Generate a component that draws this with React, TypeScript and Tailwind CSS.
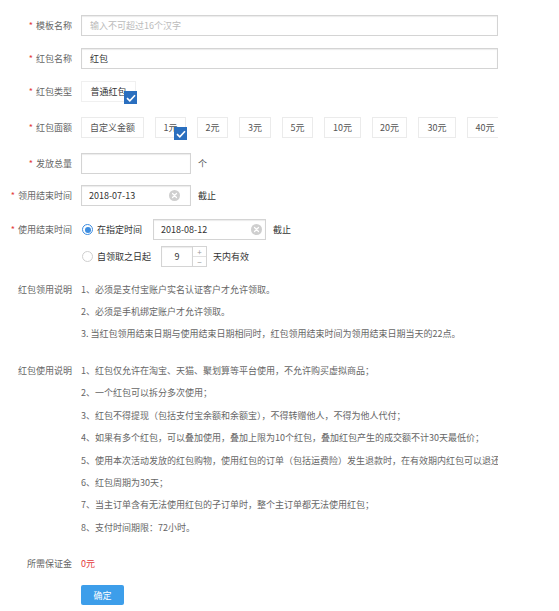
import React from 'react';

const font = { fontFamily: '"Noto Sans CJK SC", "Noto Sans", sans-serif' };

function Star() {
  return <span className="text-[#e4393c] mr-[3px]">*</span>;
}

function Label({ text, required }: { text: string; required?: boolean }) {
  return (
    <div className="w-[72px] shrink-0 text-right text-[#666] whitespace-nowrap">
      {required && <Star />}
      {text}
    </div>
  );
}

function ClearIcon() {
  return (
    <svg width="11" height="11" viewBox="0 0 11 11" className="shrink-0">
      <circle cx="5.5" cy="5.5" r="5.5" fill="#cfcfcf" />
      <path d="M3.5 3.5 L7.5 7.5 M7.5 3.5 L3.5 7.5" stroke="#fff" strokeWidth="1.2" strokeLinecap="round" />
    </svg>
  );
}

function Check() {
  return (
    <span className="absolute right-[-2px] bottom-[-3px] w-[13px] h-[13px] bg-[#2a6fbf] flex items-center justify-center">
      <svg width="10" height="8" viewBox="0 0 10 8">
        <path d="M1 4.2 L3.8 6.8 L9 1.2" stroke="#fff" strokeWidth="1.6" fill="none" />
      </svg>
    </span>
  );
}

const inputCls =
  'h-[21px] border border-[#d4d4d4] shadow-[inset_0_1px_1px_rgba(0,0,0,0.08)] bg-white flex items-center';

const amounts = [
  { t: '自定义金额', w: 'w-[63px]' },
  { t: '1元', w: 'w-[31px]', checked: true },
  { t: '2元', w: 'w-[31px]' },
  { t: '3元', w: 'w-[32px]' },
  { t: '5元', w: 'w-[31px]' },
  { t: '10元', w: 'w-[37px]' },
  { t: '20元', w: 'w-[35px]' },
  { t: '30元', w: 'w-[38px]' },
  { t: '40元', w: 'w-[36px]' },
];

const getRules = [
  '1、必须是支付宝账户实名认证客户才允许领取。',
  '2、必须是手机绑定账户才允许领取。',
  '3. 当红包领用结束日期与使用结束日期相同时，红包领用结束时间为领用结束日期当天的22点。',
];

const useRules = [
  '1、红包仅允许在淘宝、天猫、聚划算等平台使用，不允许购买虚拟商品；',
  '2、一个红包可以拆分多次使用；',
  '3、红包不得提现（包括支付宝余额和余额宝），不得转赠他人，不得为他人代付；',
  '4、如果有多个红包，可以叠加使用，叠加上限为10个红包，叠加红包产生的成交额不计30天最低价；',
  '5、使用本次活动发放的红包购物，使用红包的订单（包括运费险）发生退款时，在有效期内红包可以退还至原账户；',
  '6、红包周期为30天；',
  '7、当主订单含有无法使用红包的子订单时，整个主订单都无法使用红包；',
  '8、支付时间期限：72小时。',
];

export default function App() {
  return (
    <div className="w-[559px] min-h-[611px] bg-white text-[9px] pt-[15px]" style={font}>
      {/* 模板名称 */}
      <div className="flex items-center">
        <Label text="模板名称" required />
        <div className={`${inputCls} ml-[9px] w-[417px] px-[8px] text-[#bbb]`}>输入不可超过16个汉字</div>
      </div>

      {/* 红包名称 */}
      <div className="flex items-center mt-[12px]">
        <Label text="红包名称" required />
        <div className={`${inputCls} ml-[9px] w-[417px] px-[8px] text-[#333]`}>红包</div>
      </div>

      {/* 红包类型 */}
      <div className="flex items-center mt-[12px]">
        <Label text="红包类型" required />
        <div className="ml-[9px] relative h-[21px] w-[55px] border border-[#f0f0f0] flex items-center justify-center text-[#333]">
          普通红包
          <Check />
        </div>
      </div>

      {/* 红包面额 */}
      <div className="flex items-center mt-[12px]">
        <Label text="红包面额" required />
        <div className="ml-[9px] w-[417px] overflow-hidden">
          <div className="flex gap-[11px] py-[3px]">
            {amounts.map(a => (
              <div
                key={a.t}
                className={`relative shrink-0 ${a.w} h-[21px] border border-[#ebebeb] flex items-center justify-center text-[#555] whitespace-nowrap`}
              >
                {a.t}
                {a.checked && <Check />}
              </div>
            ))}
          </div>
        </div>
      </div>

      {/* 发放总量 */}
      <div className="flex items-center mt-[12px]">
        <Label text="发放总量" required />
        <div className={`${inputCls} ml-[9px] w-[110px]`} />
        <span className="ml-[7px] text-[#555]">个</span>
      </div>

      {/* 领用结束时间 */}
      <div className="flex items-center mt-[11px]">
        <Label text="领用结束时间" required />
        <div className={`${inputCls} ml-[9px] w-[110px] pl-[7px] pr-[10px] justify-between text-[#333]`}>
          <span>2018-07-13</span>
          <ClearIcon />
        </div>
        <span className="ml-[7px] text-[#333]">截止</span>
      </div>

      {/* 使用结束时间 */}
      <div className="flex items-center mt-[13px]">
        <Label text="使用结束时间" required />
        <div className="ml-[10px] flex items-center">
          <span className="w-[11px] h-[11px] rounded-full border border-[#3d8de0] flex items-center justify-center">
            <span className="w-[6px] h-[6px] rounded-full bg-[#3d8de0]" />
          </span>
          <span className="ml-[4px] w-[56px] text-[#333]">在指定时间</span>
          <div className={`${inputCls} w-[113px] pl-[7px] pr-[3px] justify-between text-[#333]`}>
            <span>2018-08-12</span>
            <ClearIcon />
          </div>
          <span className="ml-[7px] text-[#333]">截止</span>
        </div>
      </div>

      <div className="flex items-center mt-[6px]">
        <div className="w-[72px] shrink-0" />
        <div className="ml-[10px] flex items-center">
          <span className="w-[11px] h-[11px] rounded-full border border-[#cfcfcf]" />
          <span className="ml-[4px] w-[64px] text-[#333]">自领取之日起</span>
          <div className={`${inputCls} w-[32px] justify-center text-[#333]`}>9</div>
          <div className="w-[14px] h-[21px] border border-l-0 border-[#d4d4d4] flex flex-col text-[#999] text-[8px]">
            <span className="h-[10px] flex items-center justify-center border-b border-[#e0e0e0] leading-none">+</span>
            <span className="h-[9px] flex items-center justify-center leading-none">−</span>
          </div>
          <span className="ml-[6px] text-[#333]">天内有效</span>
        </div>
      </div>

      {/* 红包领用说明 */}
      <div className="flex mt-[12px] leading-[22px]">
        <Label text="红包领用说明" />
        <div className="ml-[9px] w-[417px] overflow-hidden text-[#666] whitespace-nowrap">
          {getRules.map(r => (
            <p key={r}>{r}</p>
          ))}
        </div>
      </div>

      {/* 红包使用说明 */}
      <div className="flex mt-[15px] leading-[22.4px]">
        <Label text="红包使用说明" />
        <div className="ml-[9px] w-[417px] overflow-hidden text-[#666] whitespace-nowrap">
          {useRules.map(r => (
            <p key={r}>{r}</p>
          ))}
        </div>
      </div>

      {/* 所需保证金 */}
      <div className="flex mt-[14px] leading-[22px]">
        <Label text="所需保证金" />
        <span className="ml-[9px] text-[#e4393c]">0元</span>
      </div>

      <div className="flex mt-[10px]">
        <div className="w-[72px] shrink-0" />
        <button className="ml-[9px] w-[43px] h-[20px] rounded-[2px] bg-[#3d9eea] text-white text-[9px]">确定</button>
      </div>
    </div>
  );
}
